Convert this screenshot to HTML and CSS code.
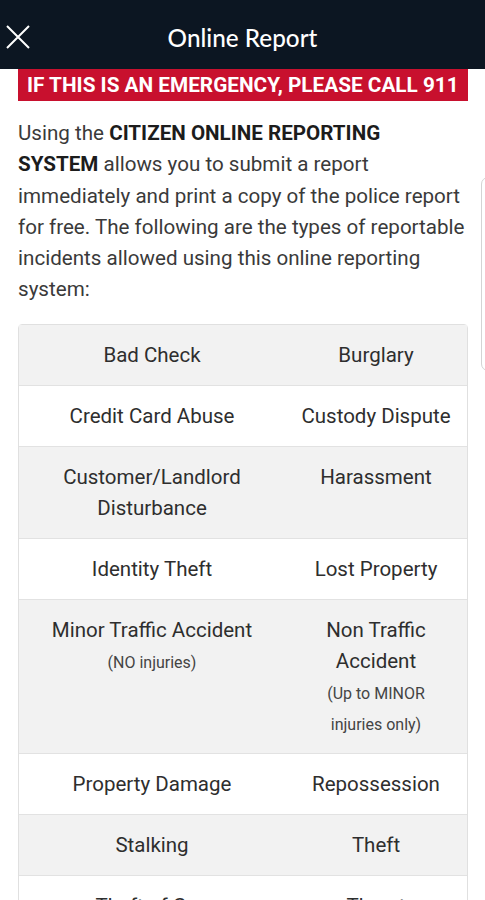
FILE: index.html
```html
<!DOCTYPE html>
<html>
<head>
<meta charset="utf-8">
<link rel="stylesheet" href="styles.css">
</head>
<body>
<header class="topbar">
  <svg class="close" width="24" height="24" viewBox="0 0 24 24"><path d="M1 1 L23 23 M23 1 L1 23" stroke="#fff" stroke-width="2" fill="none"/></svg>
  <h1 class="title">Online Report</h1>
</header>
<main class="content">
  <div class="alert">IF THIS IS AN EMERGENCY, PLEASE CALL 911</div>
  <p class="intro">Using the <b>CITIZEN ONLINE REPORTING</b><br><b>SYSTEM</b> allows you to submit a report immediately and print a copy of the police report for free. The following are the types of reportable incidents allowed using this online reporting system:</p>
  <table class="types">
    <tr><td class="c1">Bad Check</td><td class="c2">Burglary</td></tr>
    <tr><td class="c1">Credit Card Abuse</td><td class="c2">Custody Dispute</td></tr>
    <tr><td class="c1">Customer/Landlord<br>Disturbance</td><td class="c2">Harassment</td></tr>
    <tr><td class="c1">Identity Theft</td><td class="c2">Lost Property</td></tr>
    <tr><td class="c1">Minor Traffic Accident<br><small>(NO injuries)</small></td><td class="c2">Non Traffic<br>Accident<br><small>(Up to MINOR<br>injuries only)</small></td></tr>
    <tr><td class="c1">Property Damage</td><td class="c2">Repossession</td></tr>
    <tr><td class="c1">Stalking</td><td class="c2">Theft</td></tr>
    <tr><td class="c1">Theft of Gas</td><td class="c2">Threat</td></tr>
  </table>
</main>
<div class="edge-panel"></div>
</body>
</html>
```
FILE: styles.css
```css
html, body { margin: 0; padding: 0; }
body {
  background: #fff;
  font-family: Roboto, "Liberation Sans", sans-serif;
  width: 485px;
  height: 900px;
  overflow: hidden;
  position: relative;
}
.topbar {
  height: 69px;
  background: #0c1622;
  display: flex;
  align-items: center;
  justify-content: center;
  position: relative;
}
.close {
  position: absolute;
  left: 6px;
  top: 25px;
}
.title {
  margin: 5px 0 0;
  color: #fff;
  font-family: Lato, "Open Sans", sans-serif;
  font-weight: 500;
  font-size: 24.3px;
}
.content {
  padding: 0 17px 0 18px;
}
.alert {
  background: #c8102e;
  color: #fff;
  font-weight: 700;
  font-size: 20.75px;
  height: 32px;
  line-height: 33px;
  padding-left: 9px;
  white-space: nowrap;
  overflow: hidden;
}
.intro {
  margin: 17px 0 18px;
  font-size: 20.6px;
  line-height: 31.3px;
  color: #3a3a3a;
}
.intro b { color: #1c1c1c; font-weight: 700; }
.types {
  width: 100%;
  border-collapse: separate;
  border-spacing: 0;
  border: 1px solid #e0e0e0;
  border-radius: 4px;
  font-size: 20.5px;
  line-height: 31px;
  color: #2e2e2e;
}
.types td {
  text-align: center;
  vertical-align: top;
  padding: 14.5px 6px;
  border-top: 1px solid #e2e2e2;
}
.types tr:first-child td { border-top: none; padding-top: 15px; }
.types tr:nth-child(odd) td { background: #f2f2f2; }
.types .c1 { width: 254px; }
.types small { font-size: 16px; line-height: 1; color: #444; }
.edge-panel {
  position: absolute;
  left: 481px;
  top: 177px;
  width: 20px;
  height: 192px;
  border: 1px solid #d4d4d4;
  border-radius: 7px;
  background: #fff;
}
```
